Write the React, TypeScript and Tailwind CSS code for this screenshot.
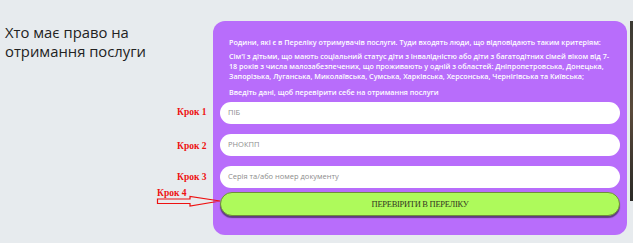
export default function App() {
  const sans = { fontFamily: '"Open Sans", "Noto Sans", sans-serif' };
  const serif = { fontFamily: '"Liberation Serif", serif' };
  return (
    <div className="relative h-[243px] w-[633px] overflow-hidden bg-[#e7ebee]">
      <div className="flex h-full">
        {/* Left heading */}
        <div className="w-[213px] shrink-0 pl-[5px] pt-[23px]">
          <h2 className="text-[14.8px] leading-[19px] text-[#222]" style={sans}>
            Хто має право на
            <br />
            отримання послуги
          </h2>
        </div>

        {/* Form panel */}
        <div className="mt-[21px] h-[214px] w-[414px] shrink-0 rounded-[12px] bg-[#b86dfb] px-[7px] pt-[16px]">
          <div
            className="flex flex-col gap-[4px] pl-[9px] pr-[5px] text-[7.2px] font-semibold leading-[10px] text-white"
            style={sans}
          >
            <p>
              Родини, які є в Переліку отримувачів послуги. Туди входять люди, що відповідають таким критеріям:
            </p>
            <p>
              Сім'ї з дітьми, що мають соціальний статус діти з інвалідністю або діти з багатодітних сімей віком від 7-18 років з числа малозабезпечених, що проживають у одній з областей: Дніпропетровська, Донецька, Запорізька, Луганська, Миколаївська, Сумська, Харківська, Херсонська, Чернігівська та Київська;
            </p>
            <p className="mt-[2px]">Введіть дані, щоб перевірити себе на отримання послуги</p>
          </div>

          <div className="mt-[5px] flex flex-col gap-[10px]">
            {['ПІБ', 'РНОКПП', 'Серія та/або номер документу'].map((p) => (
              <div
                key={p}
                className="flex h-[22px] items-center rounded-full bg-white pl-[8px] text-[7.5px] text-[#8d8d8d]"
                style={sans}
              >
                {p}
              </div>
            ))}
          </div>

          <button
            className="mt-[4px] flex h-[24px] w-full items-center justify-center rounded-full border border-[#6f8f3a] bg-[#aefa5b] text-[8.5px] tracking-[-0.3px] text-[#33361f] shadow-[0_2px_1px_rgba(60,40,80,0.7)]"
            style={serif}
          >
            ПЕРЕВІРИТИ В ПЕРЕЛІКУ
          </button>
        </div>

        {/* Edge of photo */}
        <div className="ml-[3px] mt-[21px] h-[180px] w-[3px] bg-gradient-to-b from-[#3b3a33] via-[#5a4a3a] to-[#2a2a26]" />
      </div>

      {/* Red step annotations */}
      <div className="absolute left-[177px] top-[105px] text-[9.5px] font-bold text-[#ee1111]" style={serif}>
        Крок 1
      </div>
      <div className="absolute left-[177px] top-[139px] text-[9.5px] font-bold text-[#ee1111]" style={serif}>
        Крок 2
      </div>
      <div className="absolute left-[177px] top-[170px] text-[9.5px] font-bold text-[#ee1111]" style={serif}>
        Крок 3
      </div>
      <div className="absolute left-[157px] top-[186px] text-[9.5px] font-bold text-[#ee1111]" style={serif}>
        Крок 4
      </div>
      <svg className="absolute left-[156px] top-[195px]" width="66" height="13" viewBox="0 0 66 13">
        <path
          d="M1.5 4 L34 4 L34 1.5 L64 6 L34 11 L34 8.5 L1.5 8.5 Z"
          fill="none"
          stroke="#ee1111"
          strokeWidth="1.2"
        />
      </svg>
    </div>
  );
}
